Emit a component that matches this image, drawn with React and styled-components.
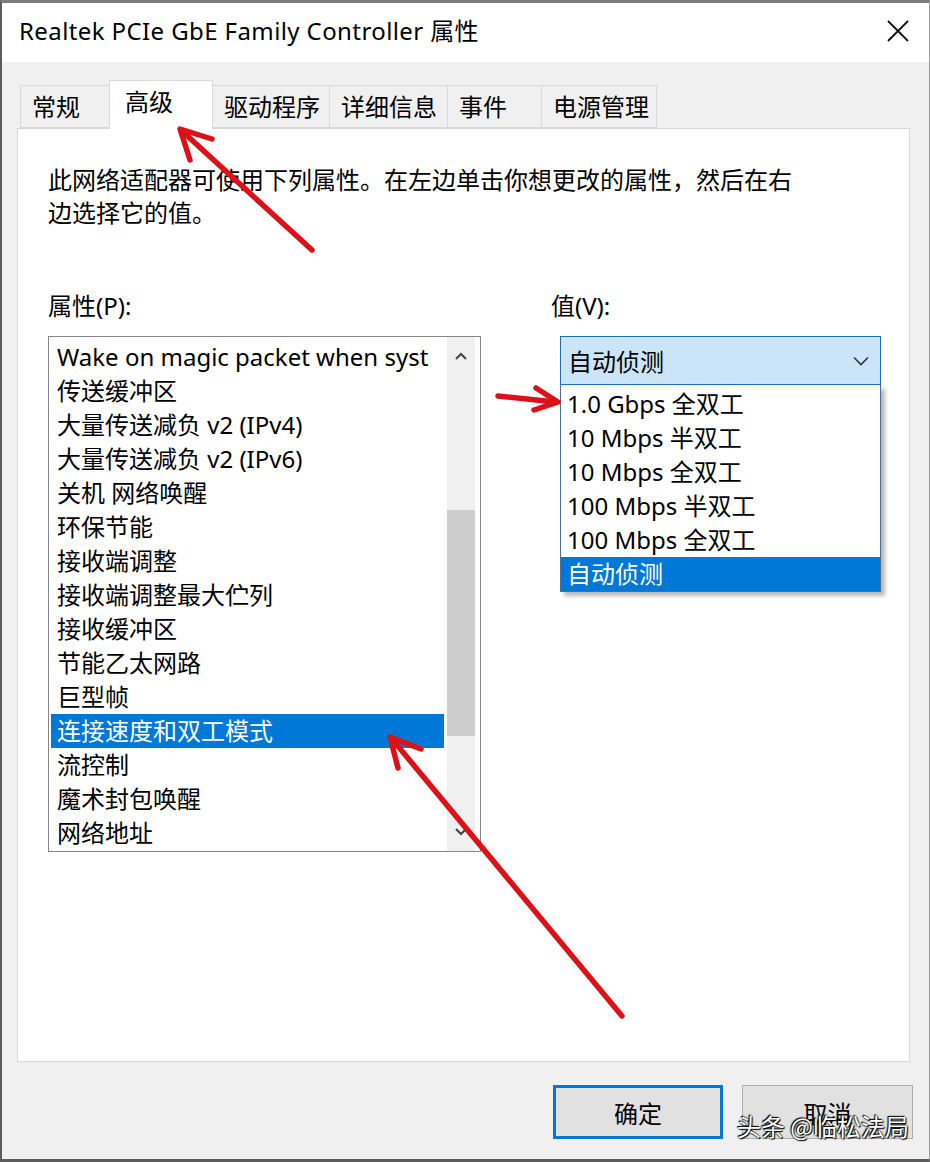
import styled, { createGlobalStyle } from "styled-components"

const GlobalStyle = createGlobalStyle`
  html, body {
    margin: 0;
    padding: 0;
    background: #f0f0f0;
  }
  * {
    box-sizing: border-box;
  }
`

const tabs = [
  { label: "常规", width: 90 },
  { label: "高级", width: 104, active: true },
  { label: "驱动程序", width: 118 },
  { label: "详细信息", width: 119 },
  { label: "事件", width: 95 },
  { label: "电源管理", width: 116 },
]

const props = [
  "Wake on magic packet when syst",
  "传送缓冲区",
  "大量传送减负 v2 (IPv4)",
  "大量传送减负 v2 (IPv6)",
  "关机 网络唤醒",
  "环保节能",
  "接收端调整",
  "接收端调整最大伫列",
  "接收缓冲区",
  "节能乙太网路",
  "巨型帧",
  "连接速度和双工模式",
  "流控制",
  "魔术封包唤醒",
  "网络地址",
]

const values = [
  "1.0 Gbps 全双工",
  "10 Mbps 半双工",
  "10 Mbps 全双工",
  "100 Mbps 半双工",
  "100 Mbps 全双工",
  "自动侦测",
]

export default function App() {
  return (
    <>
      <GlobalStyle />
      <Dialog>
        <TitleBar>
          <Title>Realtek PCIe GbE Family Controller 属性</Title>
          <CloseIcon width="22" height="22" viewBox="0 0 22 22">
            <path d="M1 1 L21 21 M21 1 L1 21" stroke="#111" strokeWidth="1.8" fill="none" />
          </CloseIcon>
        </TitleBar>

        <Body>
          <TabStrip>
            {tabs.map(t => (
              <Tab key={t.label} $width={t.width} $active={t.active}>{t.label}</Tab>
            ))}
          </TabStrip>

          <Panel>
            <Description>
              此网络适配器可使用下列属性。在左边单击你想更改的属性，然后在右<br />
              边选择它的值。
            </Description>

            <Columns>
              <Column>
                <FieldLabel>属性(P):</FieldLabel>
                <ListBox>
                  <Items>
                    {props.map((p, i) => (
                      <Item key={p} $selected={i === 11}>{p}</Item>
                    ))}
                  </Items>
                  <ScrollBar>
                    <ScrollArrow viewBox="0 0 14 10" width="14" height="10">
                      <path d="M2 8 L7 3 L12 8" stroke="#444" strokeWidth="2" fill="none" />
                    </ScrollArrow>
                    <Track>
                      <Thumb />
                    </Track>
                    <ScrollArrow viewBox="0 0 14 10" width="14" height="10">
                      <path d="M2 2 L7 7 L12 2" stroke="#444" strokeWidth="2" fill="none" />
                    </ScrollArrow>
                  </ScrollBar>
                </ListBox>
              </Column>

              <ValueColumn>
                <FieldLabel>值(V):</FieldLabel>
                <ComboWrap>
                  <Combo>
                    <span>自动侦测</span>
                    <svg width="16" height="10" viewBox="0 0 16 10">
                      <path d="M1 1.5 L8 8.5 L15 1.5" stroke="#333" strokeWidth="1.6" fill="none" />
                    </svg>
                  </Combo>
                  <DropList>
                    {values.map((v, i) => (
                      <DropItem key={v} $selected={i === values.length - 1}>{v}</DropItem>
                    ))}
                  </DropList>
                </ComboWrap>
              </ValueColumn>
            </Columns>
          </Panel>

          <Footer>
            <Button $primary>确定</Button>
            <Button>取消</Button>
          </Footer>
        </Body>

        <Arrows width="930" height="1162" viewBox="0 0 930 1162">
          <g stroke="#dc1219" strokeWidth="5.5" strokeLinecap="round" strokeLinejoin="round" fill="none">
            <path d="M312 250 L182 131" />
            <path d="M212 139 L180 129 L190 160" />
            <path d="M498 396 L555 402" />
            <path d="M536 388 L558 402 L534 410" />
            <path d="M622 1016 L392 739" />
            <path d="M421 749 L390 737 L398 768" />
          </g>
        </Arrows>

        <Watermark>头条 @临松法局</Watermark>
      </Dialog>
    </>
  )
}

const Dialog = styled.div`
  position: relative;
  width: 930px;
  height: 1162px;
  display: flex;
  flex-direction: column;
  background: #f0f0f0;
  border-top: 3px solid #7d7d7d;
  border-left: 2px solid #5c5c5c;
  border-right: 1px solid #9a9a9a;
  border-bottom: 3px solid #5c5c5c;
  font-family: "Noto Sans", "Noto Sans CJK SC", sans-serif;
  font-size: 24px;
  color: #000;
  overflow: hidden;
`

const TitleBar = styled.div`
  height: 59px;
  flex: none;
  background: #fff;
  display: flex;
  align-items: center;
  justify-content: space-between;
  padding: 0 20px 0 17px;
`

const Title = styled.div`
  font-size: 24px;
  line-height: 30px;
  letter-spacing: 0.4px;
  margin-top: -4px;
`

const CloseIcon = styled.svg`
  display: block;
  margin-top: -3px;
`

const Body = styled.div`
  flex: 1;
  display: flex;
  flex-direction: column;
  padding: 18px 19px 0 15px;
`

const TabStrip = styled.div`
  display: flex;
  align-items: flex-end;
  height: 48px;
  padding-left: 4px;
  position: relative;
  z-index: 1;
`

const Tab = styled.div`
  width: ${p => p.$width}px;
  height: ${p => (p.$active ? 49 : 43)}px;
  margin-left: -1px;
  margin-bottom: ${p => (p.$active ? -1 : 0)}px;
  padding: ${p => (p.$active ? "1px 0 0 15px" : "0 0 0 11px")};
  display: flex;
  align-items: ${p => (p.$active ? "flex-start" : "center")};
  background: ${p => (p.$active ? "#fff" : "#f0f0f0")};
  border: 1px solid #d9d9d9;
  border-bottom: ${p => (p.$active ? "none" : "1px solid #d9d9d9")};
  line-height: 40px;
  white-space: nowrap;
`

const Panel = styled.div`
  height: 934px;
  flex: none;
  background: #fff;
  border: 1px solid #d9d9d9;
  padding: 34px 0 0 30px;
`

const Description = styled.div`
  line-height: 33px;
`

const Columns = styled.div`
  display: flex;
  margin-top: 61px;
`

const Column = styled.div`
  width: 433px;
  display: flex;
  flex-direction: column;
`

const ValueColumn = styled.div`
  margin-left: 70px;
  display: flex;
  flex-direction: column;
`

const FieldLabel = styled.div`
  line-height: 32px;
  margin-bottom: 14px;
`

const ListBox = styled.div`
  height: 516px;
  border: 1px solid #82878f;
  display: flex;
  background: #fff;
`

const Items = styled.div`
  flex: 1;
  min-width: 0;
  padding: 3px 3px 0 2px;
`

const Item = styled.div`
  height: 34px;
  line-height: 34px;
  padding-left: 6px;
  white-space: nowrap;
  overflow: hidden;
  background: ${p => (p.$selected ? "#0078d7" : "transparent")};
  color: ${p => (p.$selected ? "#fff" : "#000")};
`

const ScrollBar = styled.div`
  width: 28px;
  margin-right: 5px;
  background: #f0f0f0;
  display: flex;
  flex-direction: column;
  align-items: center;
`

const ScrollArrow = styled.svg`
  flex: none;
  margin: 14px 0;
`

const Track = styled.div`
  flex: 1;
  align-self: stretch;
  padding-top: 135px;
`

const Thumb = styled.div`
  height: 226px;
  background: #cdcdcd;
`

const ComboWrap = styled.div`
  position: relative;
  margin-left: 9px;
  width: 321px;
`

const Combo = styled.div`
  height: 49px;
  border: 1px solid #1f6fb8;
  background: #cce4f7;
  display: flex;
  align-items: center;
  justify-content: space-between;
  padding: 0 11px 0 7px;
`

const DropList = styled.div`
  position: absolute;
  top: 49px;
  left: 0;
  width: 321px;
  background: #fff;
  border: 1px solid #4a6f94;
  border-top: none;
  padding-top: 2px;
  box-shadow: 4px 4px 4px rgba(0, 0, 0, 0.28);
  z-index: 2;
`

const DropItem = styled.div`
  height: 34px;
  line-height: 34px;
  padding-left: 6px;
  white-space: nowrap;
  background: ${p => (p.$selected ? "#0078d7" : "#fff")};
  color: ${p => (p.$selected ? "#fff" : "#000")};
`

const Footer = styled.div`
  display: flex;
  justify-content: flex-end;
  gap: 19px;
  margin-top: 23px;
  margin-right: -3px;
`

const Button = styled.div`
  width: ${p => (p.$primary ? 170 : 171)}px;
  height: 54px;
  display: flex;
  align-items: center;
  justify-content: center;
  background: #e1e1e1;
  border: ${p => (p.$primary ? "3px solid #0078d7" : "1px solid #adadad")};
`

const Arrows = styled.svg`
  position: absolute;
  top: -3px;
  left: -2px;
  pointer-events: none;
  z-index: 5;
`

const Watermark = styled.div`
  position: absolute;
  right: 20px;
  bottom: 19px;
  z-index: 6;
  font-family: "Noto Sans CJK SC", sans-serif;
  font-size: 24px;
  line-height: 28px;
  color: #fff;
  text-shadow: 0 0 2px #000, 1px 1px 1px #000, -1px -1px 1px #000;
`
